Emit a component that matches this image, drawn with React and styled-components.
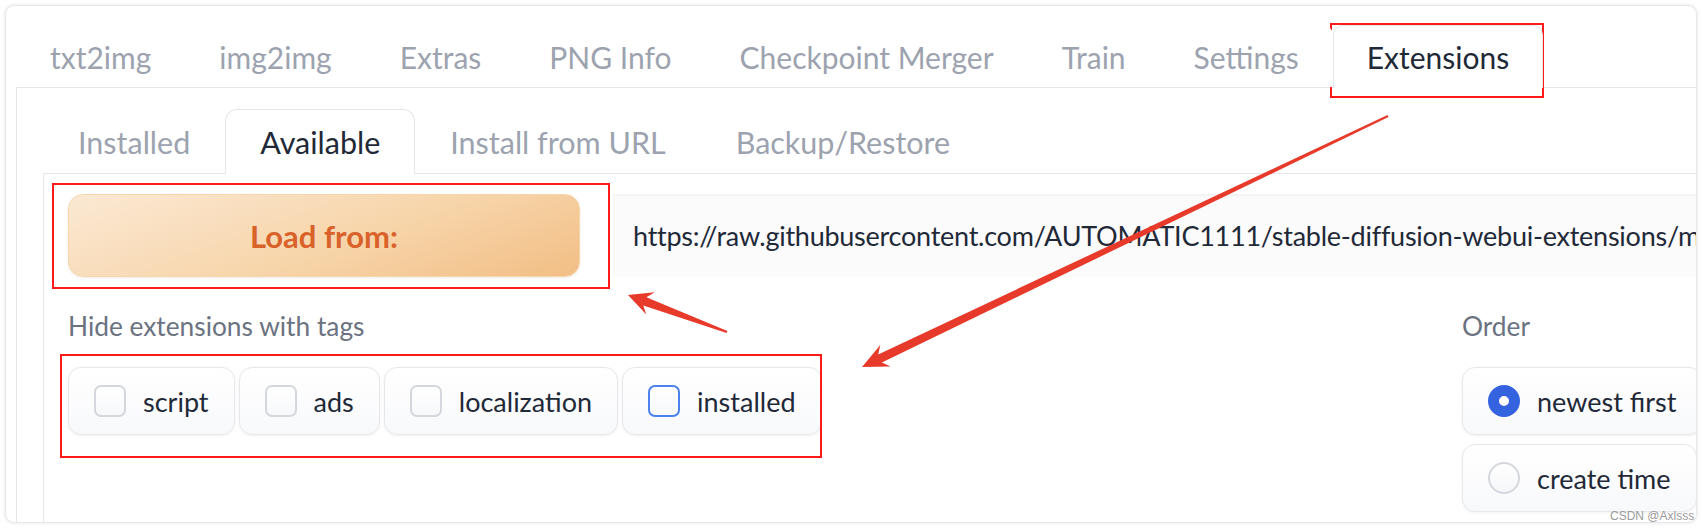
import React from "react";
import styled, { createGlobalStyle } from "styled-components";

const GlobalStyle = createGlobalStyle`
	body {
		margin: 0;
		background: #ffffff;
		font-family: Lato, "Noto Sans", sans-serif;
	}
`;

const topTabs = ["txt2img", "img2img", "Extras", "PNG Info", "Checkpoint Merger", "Train", "Settings", "Extensions"];
const subTabs = ["Installed", "Available", "Install from URL", "Backup/Restore"];
const tags = [
	{ label: "script" },
	{ label: "ads" },
	{ label: "localization" },
	{ label: "installed", focused: true },
];
const orders = [
	{ label: "newest first", checked: true },
	{ label: "create time" },
];

//annotation arrow: thin tail, widening shaft, swept head
function arrowPoints(x1, y1, x2, y2, head = 26, wing = 12) {
	const dx = x2 - x1;
	const dy = y2 - y1;
	const len = Math.hypot(dx, dy);
	const ux = dx / len;
	const uy = dy / len;
	const nx = -uy;
	const ny = ux;
	const neckX = x2 - ux * (head - 6);
	const neckY = y2 - uy * (head - 6);
	const baseX = x2 - ux * head;
	const baseY = y2 - uy * head;
	const pts = [
		[x1 + nx * 1.2, y1 + ny * 1.2],
		[neckX + nx * 4.4, neckY + ny * 4.4],
		[baseX + nx * wing, baseY + ny * wing],
		[x2, y2],
		[baseX - nx * wing, baseY - ny * wing],
		[neckX - nx * 4.4, neckY - ny * 4.4],
		[x1 - nx * 1.2, y1 - ny * 1.2],
	];
	return pts.map((p) => p.map((v) => v.toFixed(1)).join(",")).join(" ");
}

function App() {
	return (
		<>
			<GlobalStyle />
			<Page>
				<Card>
					<TabBar>
						{topTabs.map((t) => (
							<Tab key={t} $active={t === "Extensions"}>
								{t}
							</Tab>
						))}
					</TabBar>
					<Panel>
						<SubTabBar>
							{subTabs.map((t) => (
								<SubTab key={t} $active={t === "Available"}>
									{t}
								</SubTab>
							))}
						</SubTabBar>
						<SubPanel>
							<LoadRow>
								<LoadButton>Load from:</LoadButton>
								<UrlBox>
									https://raw.githubusercontent.com/AUTOMATIC1111/stable-diffusion-webui-extensions/master/index.json
								</UrlBox>
							</LoadRow>
							<FilterRow>
								<TagColumn>
									<FieldLabel>Hide extensions with tags</FieldLabel>
									<Choices>
										{tags.map((t) => (
											<Choice key={t.label}>
												<Box $focused={t.focused} />
												{t.label}
											</Choice>
										))}
									</Choices>
								</TagColumn>
								<OrderColumn>
									<FieldLabel>Order</FieldLabel>
									<RadioList>
										{orders.map((o) => (
											<Choice key={o.label}>
												<Radio $checked={o.checked} />
												{o.label}
											</Choice>
										))}
									</RadioList>
								</OrderColumn>
							</FilterRow>
						</SubPanel>
					</Panel>
				</Card>
				<Annotations width="1702" height="530" viewBox="0 0 1702 530">
					<rect x="1331" y="24" width="212" height="73" fill="none" stroke="#ff1a1a" strokeWidth="2" />
					<rect x="53" y="184" width="556" height="104" fill="none" stroke="#ff1a1a" strokeWidth="2" />
					<rect x="61" y="355" width="760" height="102" fill="none" stroke="#ff1a1a" strokeWidth="2" />
					<polygon points={arrowPoints(1388, 116, 862, 367)} fill="#e83a2b" />
					<polygon points={arrowPoints(727, 332, 628, 295, 24, 12)} fill="#e83a2b" />
				</Annotations>
				<Watermark>CSDN @Axlsss</Watermark>
			</Page>
		</>
	);
}

const Page = styled.div`
	position: relative;
	width: 1702px;
	height: 530px;
	padding: 5px 5px 7px 5px;
	box-sizing: border-box;
`;

const Card = styled.div`
	height: 518px;
	box-sizing: border-box;
	border: 1px solid #e5e7eb;
	border-radius: 9px;
	box-shadow: 0 0 4px rgba(0, 0, 0, 0.1);
	background: #ffffff;
	overflow: hidden;
	padding: 19px 0 0 10px;
`;

const TabBar = styled.div`
	display: flex;
	height: 62px;
`;

const Tab = styled.div`
	position: relative;
	z-index: 1;
	height: ${(p) => (p.$active ? "63px" : "62px")};
	box-sizing: border-box;
	padding: 0 33px;
	display: flex;
	align-items: center;
	font-size: 30px;
	white-space: nowrap;
	color: ${(p) => (p.$active ? "#1f2937" : "#9ca3af")};
	background: #ffffff;
	border: 1px solid ${(p) => (p.$active ? "#e5e7eb" : "transparent")};
	border-bottom: none;
	border-radius: 10px 10px 0 0;
`;

const Panel = styled.div`
	border-top: 1px solid #e5e7eb;
	border-left: 1px solid #e5e7eb;
	padding: 21px 0 0 26px;
	height: 440px;
	box-sizing: border-box;
`;

const SubTabBar = styled.div`
	display: flex;
	height: 64px;
`;

const SubTab = styled(Tab)`
	height: ${(p) => (p.$active ? "65px" : "64px")};
	padding: 0 34px;
	font-size: 30.5px;
	border-radius: 12px 12px 0 0;
`;

const SubPanel = styled.div`
	border-top: 1px solid #e5e7eb;
	border-left: 1px solid #e5e7eb;
	padding: 20px 0 0 24px;
	height: 400px;
	box-sizing: border-box;
`;

const LoadRow = styled.div`
	display: flex;
	gap: 33px;
	height: 83px;
`;

const LoadButton = styled.div`
	flex: 0 0 512px;
	box-sizing: border-box;
	display: flex;
	align-items: center;
	justify-content: center;
	border: 1px solid #f7d6ac;
	border-radius: 15px;
	background: linear-gradient(160deg, #fbe9d4 0%, #f7d5aa 55%, #f2be85 100%);
	box-shadow: 0 1px 3px rgba(0, 0, 0, 0.08);
	color: #d9622b;
	font-size: 31px;
	font-weight: 700;
`;

const UrlBox = styled.div`
	flex: 0 0 1200px;
	box-sizing: border-box;
	display: flex;
	align-items: center;
	padding-left: 20px;
	background: #fbfbfc;
	box-shadow: inset 0 2px 3px rgba(0, 0, 0, 0.04);
	color: #1f2937;
	font-size: 27px;
	letter-spacing: -0.25px;
	white-space: nowrap;
	overflow: hidden;
`;

const FilterRow = styled.div`
	display: flex;
	margin-top: 33px;
`;

const TagColumn = styled.div`
	flex: 0 0 1394px;
`;

const OrderColumn = styled.div`
	flex: 0 0 300px;
`;

const FieldLabel = styled.div`
	font-size: 26.3px;
	line-height: 32px;
	color: #6b7280;
	margin-bottom: 25px;
`;

const Choices = styled.div`
	display: flex;
	gap: 4px;
`;

const RadioList = styled.div`
	display: flex;
	flex-direction: column;
	align-items: flex-start;
	gap: 9px;
`;

const Choice = styled.div`
	display: inline-flex;
	align-items: center;
	gap: 17px;
	height: 68px;
	box-sizing: border-box;
	padding: 0 25px;
	border: 1px solid #e5e7eb;
	border-radius: 13px;
	background: linear-gradient(180deg, #ffffff 0%, #f8f9fb 100%);
	box-shadow: 0 1px 3px rgba(0, 0, 0, 0.06);
	color: #1f2937;
	font-size: 27px;
	white-space: nowrap;
`;

const Box = styled.span`
	width: 32px;
	height: 32px;
	box-sizing: border-box;
	border: 2px solid ${(p) => (p.$focused ? "#4c82f0" : "#d4d7dd")};
	border-radius: 7px;
	background: linear-gradient(180deg, #ffffff, #f7f8fa);
`;

const Radio = styled.span`
	width: 32px;
	height: 32px;
	box-sizing: border-box;
	border-radius: 50%;
	border: ${(p) => (p.$checked ? "11px solid #3563e0" : "2px solid #d4d7dd")};
	background: ${(p) => (p.$checked ? "#ffffff" : "linear-gradient(180deg, #ffffff, #f5f6f8)")};
`;

const Annotations = styled.svg`
	position: absolute;
	left: 0;
	top: 0;
	pointer-events: none;
`;

const Watermark = styled.div`
	position: absolute;
	left: 1610px;
	top: 509px;
	font-family: "Liberation Sans", Arial, sans-serif;
	font-size: 12px;
	color: #9a9a9a;
`;

export default App;
